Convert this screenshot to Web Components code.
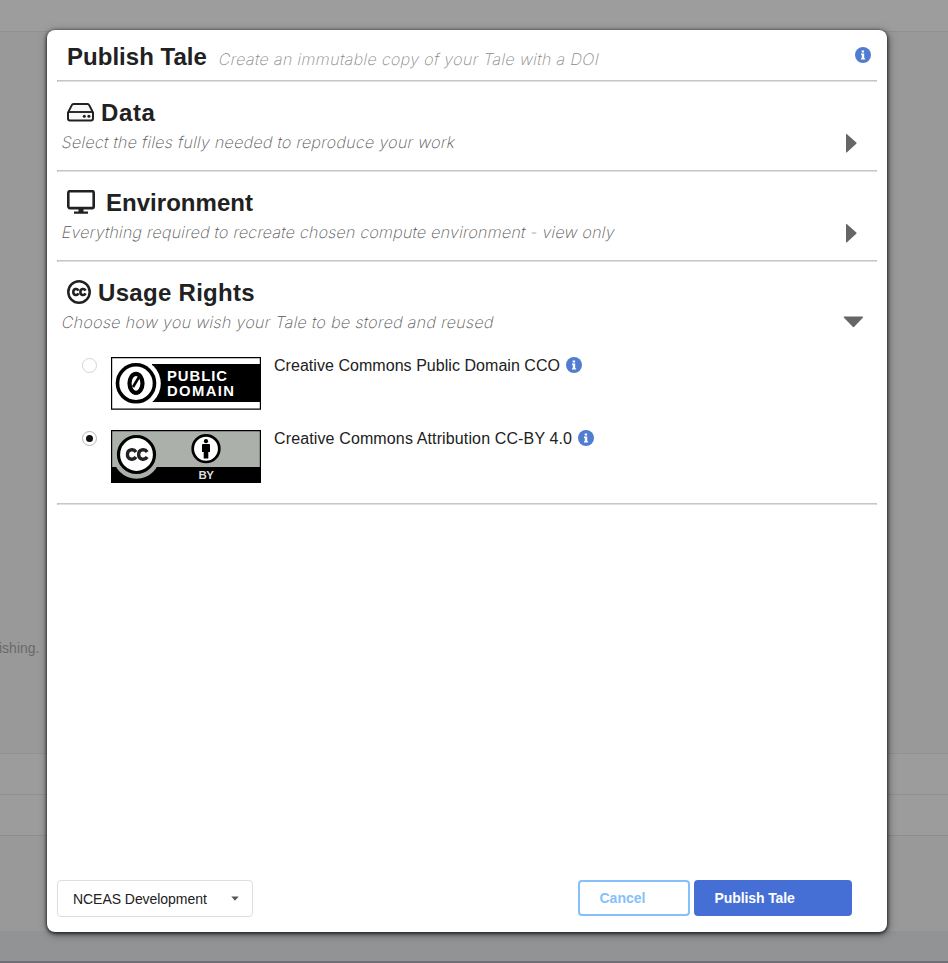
<!DOCTYPE html>
<html lang="en">
<head>
<meta charset="utf-8">
<title>Publish Tale</title>
<style>
  html, body { margin: 0; height: 963px; overflow: hidden; }
  body { font-family: "Liberation Sans", Arial, sans-serif; color: #212121; }
</style>
</head>
<body>
<page-backdrop>ishing.</page-backdrop>
<publish-dialog></publish-dialog>
<script>
const define = (name, html) => {
  const t = document.createElement('template');
  t.innerHTML = html;
  customElements.define(name, class extends HTMLElement {
    constructor() {
      super();
      this.attachShadow({ mode: 'open' }).appendChild(t.content.cloneNode(true));
    }
  });
};

define('page-backdrop', `
<style>
  :host { display: flex; flex-direction: column; height: 963px; background: #999; font-size: 14px; color: #696969; }
  div { box-sizing: border-box; flex: none; }
  .top { height: 32px; background: #9d9d9d; border-bottom: 1px solid #919191; }
  .main { height: 721px; padding-top: 608px; line-height: 16px; text-indent: -1px; }
  .row { height: 41px; background: #9c9c9c; border-top: 1px solid #919191; }
  .gap { height: 96px; border-top: 1px solid #8d8d8d; }
  .foot { height: 30px; background: #929395; }
  .end { height: 2px; background: #706f75; }
</style>
<div class="top"></div><div class="main"><slot></slot></div>
<div class="row"></div><div class="row"></div>
<div class="gap"></div><div class="foot"></div><div class="end"></div>`);

define('info-badge', `
<style>:host { display: inline-flex; width: 16px; height: 16px; } svg { width: 100%; height: 100%; }</style>
<svg viewBox="0 0 16 16"><circle cx="8" cy="8" r="8" fill="#517dd0"/>
<path fill="#fff" d="M6.7 3.4h2.4v2H6.700zM6 6.500h3.200v4.700h.9v1.400H6v-1.400h.8V7.900H6z"/></svg>`);

define('thin-note', `
<style>
  :host { display: block; font: 200 16px/20px Inter, sans-serif; white-space: nowrap; letter-spacing: var(--ps, .2px); margin-left: -.8px; transform: skewX(-12deg); transform-origin: 0 15px; }
</style><slot></slot>`);

define('icon-drive', `
<style>:host { display: flex; } svg { display: block; }</style>
<svg width="27" height="19" viewBox="0 0 27 19"><path d="M1 9.600 4.800 2.200Q5.300 1 6.500 1h14Q21.700 1 22.200 2.200L26 9.600V15.500Q26 17.500 24 17.500H3Q1 17.500 1 15.500z" fill="#f7f7f7" stroke="#212121" stroke-width="2"/>
<path d="M1.500 9h24" stroke="#212121" stroke-width="1.900"/><circle cx="17.300" cy="13.300" r="1.500" fill="#212121"/><circle cx="21.900" cy="13.300" r="1.500" fill="#212121"/></svg>`);

define('icon-monitor', `
<style>:host { display: flex; } svg { display: block; }</style>
<svg width="28" height="25" viewBox="0 0 28 25"><rect x="1.300" y="1.100" width="25.400" height="17" rx="1.600" fill="none" stroke="#212121" stroke-width="2.600"/>
<path d="M11.500 18.500h5v3H21v2.300H7v-2.300h4.500z" fill="#212121"/></svg>`);

define('icon-cc', `
<style>:host { display: flex; } svg { display: block; }</style>
<svg width="24" height="24" viewBox="0 0 24 24" fill="none" stroke="#212121"><circle cx="12" cy="12" r="10.700" stroke-width="2.500"/>
<path d="M11.500 10.600C10 7.900 6.300 8.700 6.300 12S10 16.100 11.500 13.400M18.600 10.600C17.100 7.900 13.400 8.700 13.400 12S17.100 16.100 18.600 13.400" stroke-width="2.600"/></svg>`);

define('section-row', `
<style>
  :host { display: block; position: relative; box-sizing: border-box; padding: 17px 0 0 5px; }
  .head { display: flex; height: 26px; padding-left: 5px; align-items: flex-start; }
  ::slotted([slot=icon]) { margin-top: 1px; }
  h2 { margin: 0; font-size: 24px; line-height: 27px; letter-spacing: var(--ls, .3px); padding-left: var(--gap, 7px); }
  thin-note { margin-top: 7px; color: #555; }
  svg { position: absolute; right: 12px; top: 50px; }
  .down { display: none; top: 49px; }
  :host([open]) .down { display: block; }
  :host([open]) .right { display: none; }
</style>
<div class="head"><slot name="icon"></slot><h2><slot name="title"></slot></h2></div>
<thin-note><slot></slot></thin-note>
<svg class="right" width="24" height="24"><path d="M6 3Q5 2 5 3.500V20.500Q5 22 6 21L15.300 12.600Q16 12 15.300 11.400z" fill="#666" transform="translate(0 -.800)"/></svg>
<svg class="down" width="24" height="24"><path d="M3.400 5.500H21.300Q22.800 5.500 21.800 6.700L13.300 15.800Q12.500 16.500 11.700 15.800L3 6.700Q2 5.500 3.400 5.500z" fill="#666"/></svg>`);

define('rule-line', `
<style>:host { display: block; height: 2px; flex: none; box-sizing: border-box; border: 1px solid #c6c6c6; border-bottom-color: #e0e0e0; border-left-color: #aaa; }</style>`);

define('badge-zero', `
<style>:host { display: block; } svg { display: block; }</style>
<svg width="150" height="53" viewBox="0 0 150 53" font-family="Liberation Sans, Arial, sans-serif" font-weight="700">
<path d="M.6.6h148.800v51.500H.6z" fill="#fff" stroke="#000" stroke-width="1.200"/>
<path d="M41 7H149v38H41z"/><circle cx="25.500" cy="26.500" r="24.300" fill="#fff"/>
<circle cx="25" cy="26.300" r="18.500" fill="#fff" stroke="#000" stroke-width="3.600"/>
<ellipse cx="25" cy="26.300" rx="6.500" ry="9.500" fill="none" stroke="#000" stroke-width="4.200"/><path d="M22 30 28 20" stroke="#000" stroke-width="2.600"/>
<g fill="#fff" font-size="14.800"><text x="56" y="23.600" textLength="60">PUBLIC</text><text x="56" y="38.600" textLength="67">DOMAIN</text></g></svg>`);

define('badge-by', `
<style>:host { display: block; } svg { display: block; }</style>
<svg width="150" height="53" viewBox="0 0 150 53" font-family="Liberation Sans, Arial, sans-serif" font-weight="700">
<path d="M.6.6h148.800v51.800H.6z" fill="#abb1aa" stroke="#000" stroke-width="1.200"/><path d="M0 37h150v16H0z"/>
<clipPath id="c"><path d="M1 1h148v48H1z"/></clipPath><circle cx="25.500" cy="25.500" r="23.300" fill="#abb1aa" clip-path="url(#c)"/>
<circle cx="25.500" cy="24.500" r="18" fill="#fff" stroke="#000" stroke-width="3.200"/>
<path d="M25 22C22.700 18.400 16.400 19.200 16.400 24.500S22.700 30.600 25 27M36.200 22C33.900 18.400 27.600 19.200 27.600 24.500S33.900 30.600 36.200 27" fill="none" stroke="#222" stroke-width="3.300"/>
<circle cx="95" cy="18.700" r="13.300" fill="#fff" stroke="#000" stroke-width="2.700"/><circle cx="95" cy="11.200" r="2.100"/>
<path d="M92 14h6Q99 14 99 15v7h-1.700v6.500h-4.600V22H91v-7Q91 14 92 14z"/>
<text x="87.500" y="49.400" fill="#ddd" font-size="11.500" textLength="15.500">BY</text></svg>`);

define('license-option', `
<style>
  :host { display: flex; height: 73px; align-items: flex-start; padding-left: 25px; }
  i { width: 15px; height: 15px; box-sizing: border-box; border: 1px solid #d4d4d5; border-radius: 50%; margin: 1px 14px 0 0; display: grid; place-items: center; }
  :host([checked]) i { border-color: #b5b5b5; }
  :host([checked]) i::after { content: ""; width: 7px; height: 7px; border-radius: 50%; background: #111; }
  span { font-size: 16px; line-height: 18px; margin-left: 13px; margin-right: 6px; letter-spacing: var(--ls, 0); white-space: nowrap; }
</style>
<i></i><slot name="badge"></slot><span><slot></slot></span><info-badge></info-badge>`);

define('select-box', `
<style>
  :host { display: flex; box-sizing: border-box; width: 196px; height: 37px; border: 1px solid #dededf; border-radius: 4px; padding: 0 13px 0 15px; align-items: center; justify-content: space-between; font-size: 14px; letter-spacing: -.05px; }
</style><span><slot></slot></span><svg width="8" height="5"><path d="M.3.500h7.400L4 4.700z" fill="#555"/></svg>`);

define('action-button', `
<style>
  :host { display: block; box-sizing: border-box; width: 112px; height: 35.500px; border-radius: 4px; border: 2px solid #85c0fa; color: #85c0fa; font: 700 14px/33px "Liberation Sans", Arial, sans-serif; padding-left: 19.500px; }
  :host([primary]) { width: 158px; background: #466fd6; border-color: #466fd6; color: #fff; padding-left: 18.500px; letter-spacing: -.1px; }
</style><slot></slot>`);

define('publish-dialog', `
<style>
  :host { position: absolute; left: 47px; top: 30px; width: 840px; height: 901.500px; box-sizing: border-box; padding: 0 10px; background: #fff; border-radius: 8px; box-shadow: 0 1px 3px 1px rgba(0,0,0,.55), 1px 2px 8px rgba(0,0,0,.5); display: flex; flex-direction: column; }
  header { height: 50px; flex: none; display: flex; padding: 0 6px 0 10px; align-items: flex-start; }
  h1 { margin: 13px 12px 0 0; font-size: 24px; line-height: 28px; letter-spacing: .03px; }
  header thin-note { margin-top: 19px; color: #888; --ps: .365px; }
  header info-badge { margin: 17px 0 0 auto; }
  .sec { height: 88px; flex: none; }
  .usage { height: 95px; flex: none; }
  .options { height: 146px; flex: none; }
  footer { margin-top: auto; height: 51.500px; display: flex; align-items: flex-start; gap: 4px; padding-right: 25px; }
  select-box { margin-right: auto; }
</style>
<header><h1>Publish Tale</h1><thin-note>Create an immutable copy of your Tale with a DOI</thin-note><info-badge></info-badge></header>
<rule-line></rule-line>
<section-row class="sec" style="--gap:7px;--ls:.600px;--ps:.310px"><icon-drive slot="icon" style="padding-top:3px"></icon-drive><span slot="title">Data</span>Select the files fully needed to reproduce your work</section-row>
<rule-line></rule-line>
<section-row class="sec" style="--gap:11px;--ls:.030px;--ps:.255px"><icon-monitor slot="icon"></icon-monitor><span slot="title">Environment</span>Everything required to recreate chosen compute environment - view only</section-row>
<rule-line></rule-line>
<section-row class="usage" open style="--gap:7px;--ps:.350px"><icon-cc slot="icon"></icon-cc><span slot="title">Usage Rights</span>Choose how you wish your Tale to be stored and reused</section-row>
<div class="options">
<license-option style="--ls:.045px"><badge-zero slot="badge"></badge-zero>Creative Commons Public Domain CCO</license-option>
<license-option checked style="--ls:.130px"><badge-by slot="badge"></badge-by>Creative Commons Attribution CC-BY 4.0</license-option>
</div>
<rule-line></rule-line>
<footer><select-box>NCEAS Development</select-box><action-button>Cancel</action-button><action-button primary>Publish Tale</action-button></footer>`);
</script>
</body>
</html>
